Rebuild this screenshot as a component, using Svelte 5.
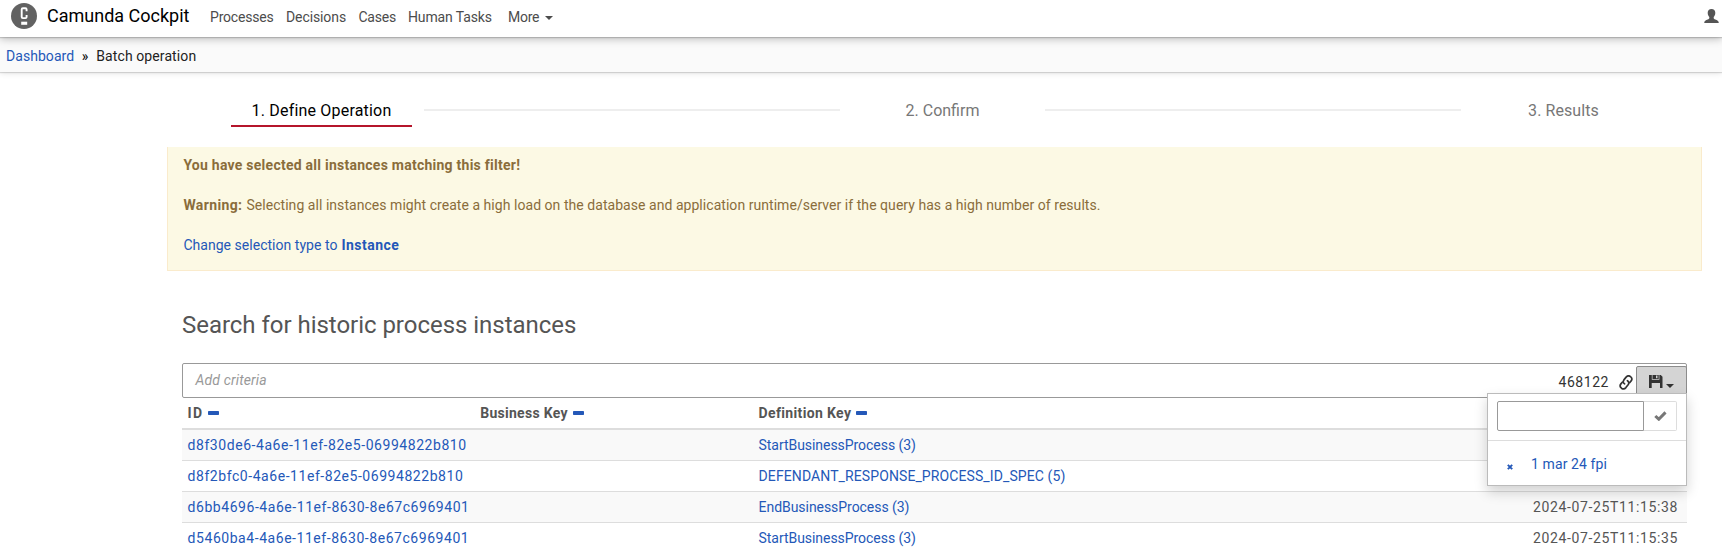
<script>
  const rows = [
    { id: 'd8f30de6-4a6e-11ef-82e5-06994822b810', key: 'StartBusinessProcess (3)', time: '' },
    { id: 'd8f2bfc0-4a6e-11ef-82e5-06994822b810', key: 'DEFENDANT_RESPONSE_PROCESS_ID_SPEC (5)', time: '' },
    { id: 'd6bb4696-4a6e-11ef-8630-8e67c6969401', key: 'EndBusinessProcess (3)', time: '2024-07-25T11:15:38' },
    { id: 'd5460ba4-4a6e-11ef-8630-8e67c6969401', key: 'StartBusinessProcess (3)', time: '2024-07-25T11:15:35' }
  ];
</script>

{#snippet minus()}
  <svg class="minus" width="11" height="4" viewBox="0 0 11 4"><rect width="11" height="4" rx="0.7" fill="#2458b8" /></svg>
{/snippet}

<div class="page">
  <header>
    <svg class="logo" width="26" height="26" viewBox="0 0 26 26">
      <circle cx="13" cy="13" r="13" fill="#626262" />
      <path d="M15.6 8.2V6.5Q15.6 5.3 14.4 5.3H11.9Q10.7 5.3 10.7 6.5V13.9Q10.7 15.1 11.9 15.1H14.4Q15.6 15.1 15.6 13.9V12" fill="none" stroke="#fff" stroke-width="1.9" />
      <rect x="10.2" y="18.7" width="6" height="3.1" fill="#fff" />
    </svg>
    <span class="brand">Camunda Cockpit</span>
    <nav>
      <a class="n1" href="#p">Processes</a>
      <a class="n2" href="#d">Decisions</a>
      <a class="n3" href="#c">Cases</a>
      <a class="n4" href="#h">Human Tasks</a>
      <a class="n5" href="#m">More<svg width="8" height="4" viewBox="0 0 8 4"><path d="M0 0H8L4 4Z" fill="#4c4c4c" /></svg></a>
    </nav>
    <svg class="user" width="15" height="14" viewBox="0 0 15 14">
      <path d="M7.5 0C9.9 0 11.3 1.5 11.3 3.7C11.3 5.8 10.5 7 9.7 7.9V9.1C9.7 9.8 10.2 10.1 11.3 10.6C13.3 11.5 14.6 11.9 14.8 14H0.2C0.4 11.9 1.7 11.5 3.7 10.6C4.8 10.1 5.3 9.8 5.3 9.1V7.9C4.5 7 3.7 5.8 3.7 3.7C3.7 1.5 5.1 0 7.5 0Z" fill="#555" />
    </svg>
  </header>

  <div class="crumbs">
    <a href="#dash">Dashboard</a><span class="sep">»</span><span class="here">Batch operation</span>
  </div>

  <main>
    <div class="steps">
      <div class="step active">1. Define Operation</div>
      <div class="line"></div>
      <div class="step confirm">2. Confirm</div>
      <div class="line"></div>
      <div class="step results">3. Results</div>
    </div>

    <div class="alert">
      <p><b class="lead">You have selected all instances matching this filter!</b></p>
      <p><b class="warn">Warning:</b><span class="msg">Selecting all instances might create a high load on the database and application runtime/server if the query has a high number of results.</span></p>
      <p><a href="#type"><span class="change">Change selection type to</span><b class="inst">Instance</b></a></p>
    </div>

    <section>
      <h3>Search for historic process instances</h3>
      <div class="search">
        <i class="hint">Add criteria</i>
        <span class="count">468122</span>
        <svg class="link" width="14" height="15" viewBox="0 0 14 15">
          <g fill="none" stroke="#333" stroke-width="1.7" stroke-linecap="round" stroke-linejoin="round">
            <path d="M5.6 8.9C4 7.9 3.9 6.3 4.9 4.9L7.1 2.1C8.3 .7 10.1 .6 11.5 1.6C13 2.8 13.2 4.5 12.1 5.9L10.6 7.7" />
            <path d="M8.4 5.7C10 6.7 10.1 8.3 9.1 9.7L6.9 12.6C5.7 14.1 3.9 14.2 2.5 13.2C1 12 .8 10.3 1.9 8.9L3.3 7.2" />
          </g>
        </svg>
        <div class="save">
          <svg width="14" height="13" viewBox="0 0 14 13">
            <path d="M0 0H2.8V4.8H10.4V0H11.8L13.5 1.7V13H11V7.9H2.7V13H0Z" fill="#333" />
            <path d="M3.5 0H9.7V4H3.5Z" fill="#333" /><path d="M7 .6H8.5V3.2H7Z" fill="#d4d4d4" />
          </svg>
          <svg class="caret" width="8" height="4" viewBox="0 0 8 4"><path d="M0 0H8L4 4Z" fill="#333" /></svg>
        </div>
        <div class="menu">
          <div class="form">
            <div class="input"></div>
            <div class="ok">
              <svg width="13" height="10" viewBox="0 0 13 10"><path d="M1.3 5L4.8 8.2L11.5 1.4" fill="none" stroke="#777" stroke-width="3" /></svg>
            </div>
          </div>
          <div class="item">
            <svg width="6" height="6" viewBox="0 0 6 6"><path d="M.8 .8L5.2 5.2M5.2 .8L.8 5.2" stroke="#2458b8" stroke-width="1.9" /></svg>
            <a href="#saved">1 mar 24 fpi</a>
          </div>
        </div>
      </div>

      <div class="table">
        <div class="row head">
          <span><b class="h1">ID</b>{@render minus()}</span>
          <span><b class="h2">Business Key</b>{@render minus()}</span>
          <span><b class="h3">Definition Key</b>{@render minus()}</span>
          <span></span>
        </div>
        {#each rows as r, i}
          <div class="row" class:odd={i % 2 === 0}>
            <a class="id" href="#id">{r.id}</a>
            <span></span>
            <a class="key" class:caps={i === 1} href="#key">{r.key}</a>
            <span class="time">{r.time}</span>
          </div>
        {/each}
      </div>
    </section>
  </main>
</div>

<style>
  :global(body) { background: #fff; overflow: hidden; }
  .page { font: 14px/20px Roboto, sans-serif; color: #555; width: 100%; height: 552px; overflow: hidden; box-sizing: border-box; }
  a { color: #2458b8; text-decoration: none; }
  p { margin: 0; }
  svg { display: block; flex: none; }

  header { height: 37px; display: flex; align-items: flex-start; padding: 0 3px 0 11px; box-sizing: border-box; background: #fff; position: relative; box-shadow: 0 1px 1px rgba(0,0,0,.16), 0 2px 8px rgba(0,0,0,.25); z-index: 2; }
  .logo { margin-top: 3px; }
  .brand { margin: 6px 0 0 10px; width: 163px; font-size: 18px; color: #000; letter-spacing: 0; white-space: nowrap; }
  nav { display: flex; margin-top: 7px; }
  nav a { color: #4c4c4c; white-space: nowrap; }
  .n1 { width: 76px; letter-spacing: -.2px; }
  .n2 { width: 72.5px; letter-spacing: -.1px; }
  .n3 { width: 49.5px; letter-spacing: -.25px; }
  .n4 { width: 100px; letter-spacing: -.13px; }
  .n5 { letter-spacing: -.25px; display: flex; align-items: center; gap: 6px; }
  .n5 svg { margin-top: 2px; }
  .user { margin: 9px 0 0 auto; }

  .crumbs { height: 35px; background: #fafafa; display: flex; align-items: flex-start; padding: 9px 0 0 6px; box-sizing: border-box; position: relative; box-shadow: 0 1px 1px rgba(0,0,0,.13), 0 1px 6px rgba(0,0,0,.12); z-index: 1; }
  .crumbs a { letter-spacing: .05px; }
  .sep { color: #000; margin: 0 7.5px 0 7.5px; letter-spacing: .5px; }
  .here { color: #222; letter-spacing: .1px; }

  main { padding: 21px 20px 0 167px; }
  .steps { display: grid; grid-template-columns: 205px 416px 205px 416px 205px; margin-left: 52px; height: 54px; align-items: start; }
  .step { margin: 0 12px; padding-top: 8px; height: 24px; text-align: center; font-size: 16px; color: #777; }
  .active { color: #000; border-bottom: 2px solid #b5152b; letter-spacing: .19px; }
  .results { letter-spacing: .09px; }
  .line { height: 2px; background: #eee; margin-top: 16px; }

  .alert { height: 124px; box-sizing: border-box; background: #fcf9e4; border: 1px solid #faebcc; border-top: 0; padding: 8px 15.4px 0; display: flex; flex-direction: column; gap: 20px; color: #8a6d3b; white-space: nowrap; }
  .lead { letter-spacing: .25px; }
  .warn { letter-spacing: .38px; margin-right: 4px; }
  .msg { letter-spacing: .045px; }
  .change { letter-spacing: .03px; margin-right: 4px; }
  .inst { letter-spacing: .48px; }

  section { padding: 39px 15px 0; }
  h3 { margin: 0 0 23px; font-size: 24px; line-height: 30px; font-weight: 400; letter-spacing: -.03px; }
  .search { height: 35px; box-sizing: border-box; border: 1px solid #999; border-radius: 2px; display: flex; align-items: flex-start; position: relative; }
  .hint { margin: 6px 0 0 12.5px; color: #999; letter-spacing: .15px; }
  .count { margin: 8px 10px 0 auto; color: #333; letter-spacing: .55px; }
  .link { margin: 11px 3px 0 0; }
  .save { width: 51px; height: 33px; box-sizing: border-box; margin: 2px -1px 0 0; border: 1px solid #8c8c8c; border-radius: 2px 2px 0 0; background: #d4d4d4; display: flex; padding: 8px 0 0 12px; }
  .caret { margin: 9px 0 0 3px; }
  .menu { position: absolute; right: -1px; top: 29px; width: 200px; height: 93px; box-sizing: border-box; border: 1px solid #bbb; background: #fff; box-shadow: 0 6px 12px rgba(0,0,0,.18); z-index: 3; }
  .form { display: flex; padding: 7px 9px 9px; border-bottom: 1px solid #ddd; }
  .input { width: 147px; height: 30px; box-sizing: border-box; border: 1px solid #999; border-radius: 2px 0 0 2px; }
  .ok { flex: 1; height: 30px; box-sizing: border-box; border: 1px solid #ddd; border-left: 0; border-radius: 0 2px 2px 0; display: flex; align-items: center; justify-content: center; }
  .item { display: flex; align-items: flex-start; padding: 13px 0 0 19px; }
  .item svg { margin: 10px 18px 0 0; }
  .item a { letter-spacing: .1px; }

  .row { display: grid; grid-template-columns: 292.6px 278.4px 1fr 160px; height: 31px; box-sizing: border-box; padding: 5px 9px 0 5.6px; border-bottom: 1px solid #ddd; white-space: nowrap; }
  .odd { background: #f9f9f9; }
  .head { height: 32px; border-bottom-width: 2px; }
  .head span { display: flex; align-items: flex-start; }
  .minus { margin: 8px 0 0 5px; }
  .h1 { letter-spacing: 1.3px; }
  .h2 { letter-spacing: .28px; }
  .h3 { letter-spacing: .35px; }
  .id { letter-spacing: .55px; }
  .key { letter-spacing: -.05px; }
  .caps { letter-spacing: .1px; }
  .time { text-align: right; letter-spacing: .63px; }
</style>
